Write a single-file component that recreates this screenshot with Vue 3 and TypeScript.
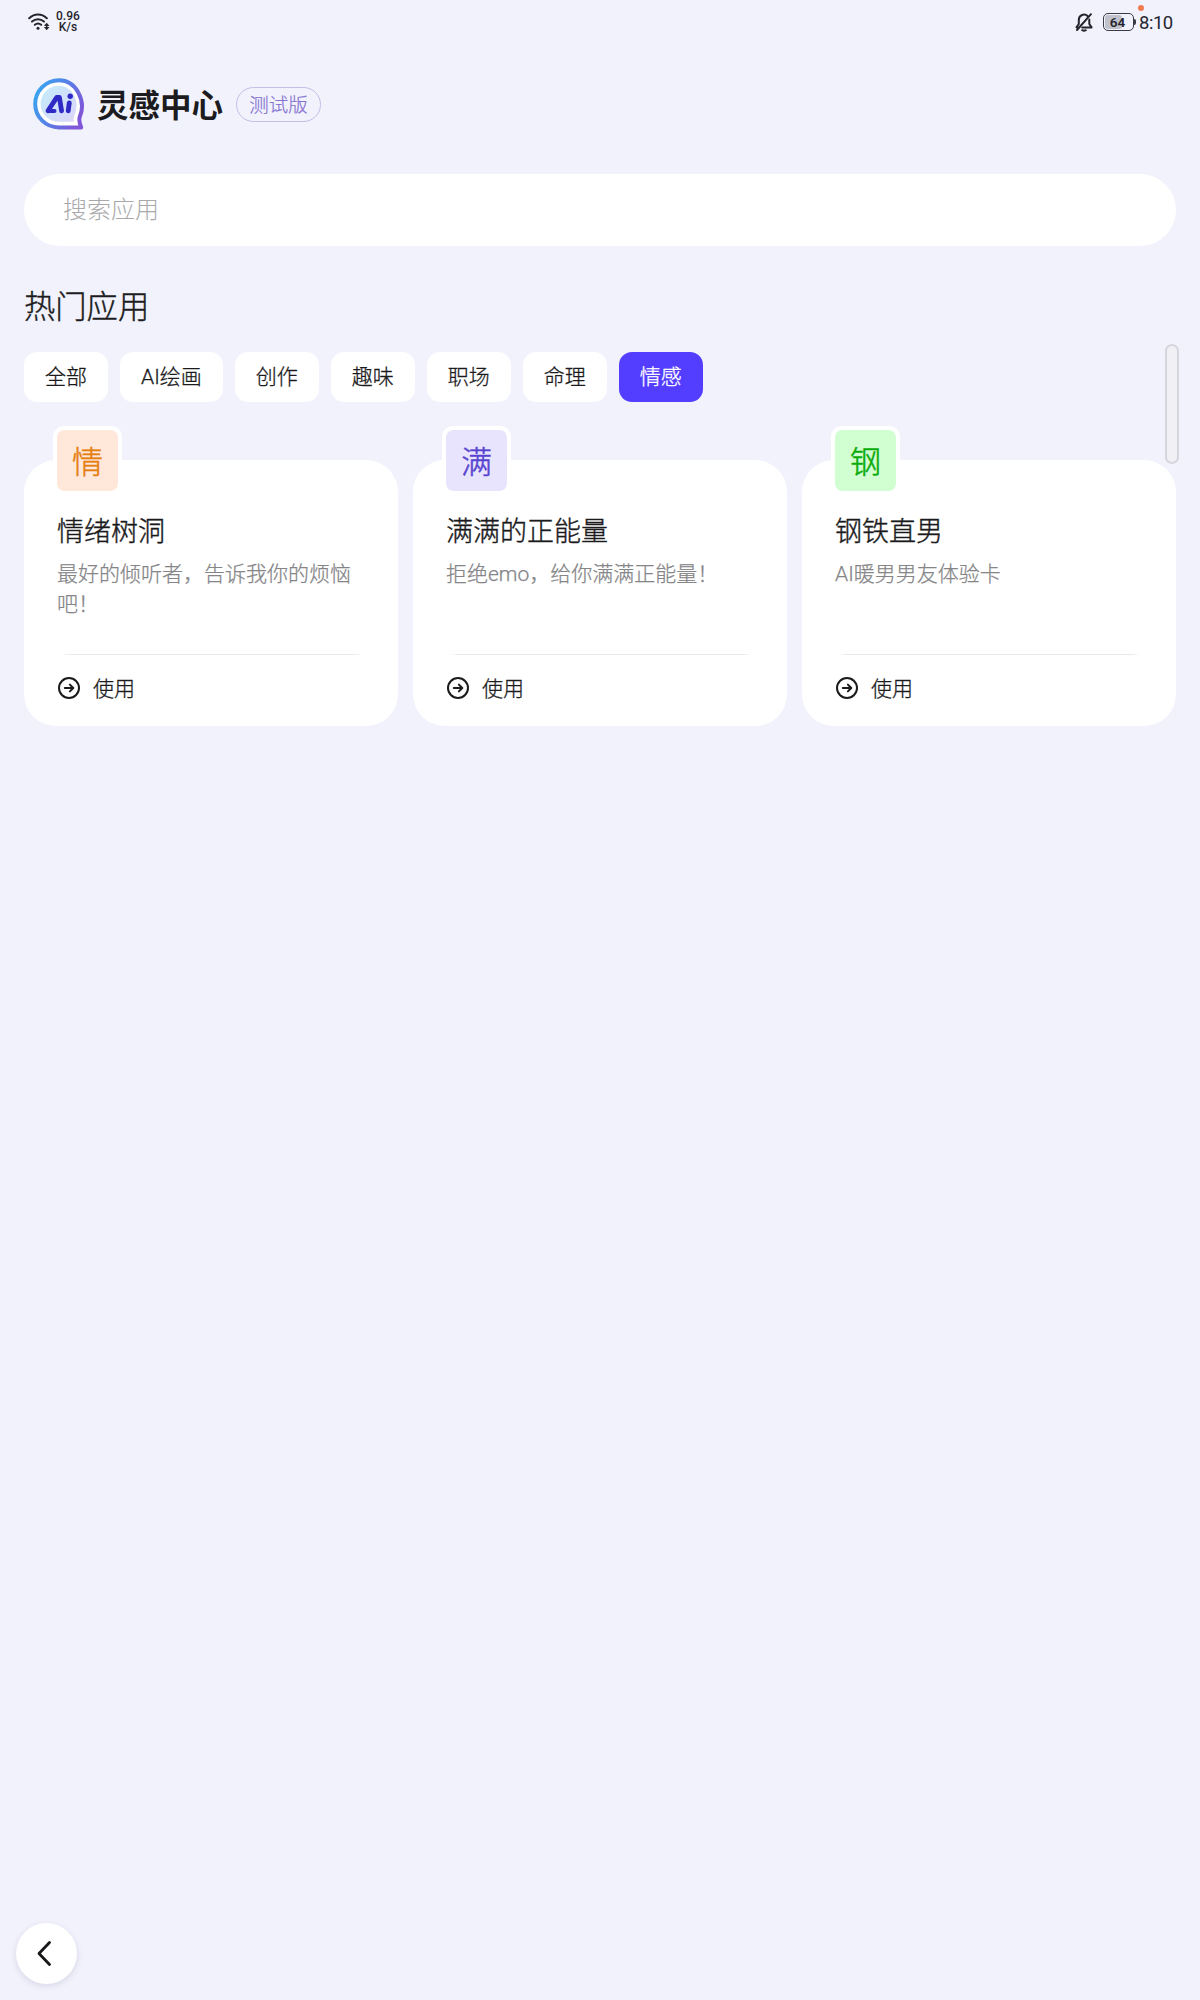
<script setup lang="ts">
import { ref } from 'vue'

interface AppCard {
  mark: string
  name: string
  desc: string
  tone: string
}

const tabs: string[] = ['全部', 'AI绘画', '创作', '趣味', '职场', '命理', '情感']
const activeTab = ref('情感')
const keyword = ref('')

const cards: AppCard[] = [
  { mark: '情', name: '情绪树洞', desc: '最好的倾听者，告诉我你的烦恼吧！', tone: 'orange' },
  { mark: '满', name: '满满的正能量', desc: '拒绝emo，给你满满正能量！', tone: 'violet' },
  { mark: '钢', name: '钢铁直男', desc: 'AI暖男男友体验卡', tone: 'green' },
]
</script>

<template>
  <div class="page">
    <div class="status">
      <div class="status-left">
        <svg class="wifi" width="22" height="18" viewBox="0 0 22 18" fill="none" stroke="#25252d" stroke-width="2" stroke-linecap="round">
          <path d="M1.200 5.200C6.400 .3 13.600 .3 18.800 5.200" />
          <path d="M4 8.600C7.500 5.500 12.500 5.500 16 8.600" />
          <path d="M6.800 11.800C8.800 10.200 11.200 10.200 13.200 11.800" />
          <circle cx="10" cy="15.200" r="1.500" fill="#25252d" stroke="none" />
          <path d="M18.700 9.800L21.500 13H15.900ZM18.700 17.200L21.500 14H15.900Z" fill="#25252d" stroke="none" />
          <path d="M18.700 12V15" stroke-width="1.500" />
        </svg>
        <div class="speed"><span>0.96</span><span>K/s</span></div>
      </div>
      <div class="status-right">
        <svg class="bell" width="18" height="20" viewBox="0 0 18 20" fill="none" stroke="#25252d" stroke-width="2" stroke-linecap="round" stroke-linejoin="round">
          <path d="M12.800 4.200C9.500 .8 3.800 3 3.800 8V12L1.500 15.400H2.800" />
          <path d="M14.300 7.500V12L16.600 15.400H7.200" />
          <path d="M16 2.200L2 18" />
          <path d="M7.200 18.200Q9 19.200 10.800 18.200" />
        </svg>
        <div class="battery"><i class="charge"></i><b>64</b></div>
        <span class="clock">8:10</span>
        <i class="dot"></i>
      </div>
    </div>

    <header class="brand">
      <svg class="logo" width="52" height="52" viewBox="0 0 52 52">
        <defs>
          <linearGradient id="ring" x1="0" y1="0.200" x2="1" y2="0.700">
            <stop offset="0" stop-color="#38a6f0" />
            <stop offset="0.500" stop-color="#587fe6" />
            <stop offset="1" stop-color="#8056d8" />
          </linearGradient>
          <linearGradient id="fill" x1="0" y1="0" x2="1" y2="1">
            <stop offset="0" stop-color="#c3ecfb" />
            <stop offset="1" stop-color="#dcd5fa" />
          </linearGradient>
        </defs>
        <path d="M26 2.200C12.800 2.200 2.200 12.800 2.200 26S12.800 49.400 26 49.400H48.200C46.800 46.200 45.800 43 46.600 39.400C53.600 23.500 43.500 2.200 26 2.200Z" fill="#fff" stroke="url(#ring)" stroke-width="4" stroke-linejoin="round" />
        <path d="M26 7.800C16 7.800 7.600 16 7.600 26S16 43.800 26 43.800H40.800Q40.300 40.500 41.400 37.500C47.800 24 39.500 7.800 26 7.800Z" fill="url(#fill)" />
        <g class="monogram" fill="none" stroke="#3029c6" stroke-width="4.800" stroke-linecap="round" stroke-linejoin="round">
          <path d="M15 32.800L23.800 19.400H26.400L28.600 32.800" />
          <path d="M16 33H21.500" stroke-width="4" />
          <path d="M36.300 24.800L35.200 32.800" />
          <circle cx="37.200" cy="18.300" r="2.700" fill="#3029c6" stroke="none" />
        </g>
      </svg>
      <h1>灵感中心</h1>
      <span class="beta">测试版</span>
    </header>

    <input v-model="keyword" class="search" type="text" placeholder="搜索应用" />

    <h2>热门应用</h2>

    <section class="content">
      <nav class="tabs">
        <button v-for="t in tabs" :key="t" :class="['tab', { active: t === activeTab }]" @click="activeTab = t">{{ t }}</button>
      </nav>
      <div class="grid">
        <article v-for="c in cards" :key="c.name" class="card">
          <div :class="['mark', c.tone]">{{ c.mark }}</div>
          <h3>{{ c.name }}</h3>
          <p>{{ c.desc }}</p>
          <div class="line"></div>
          <div class="use">
            <svg width="24" height="24" viewBox="0 0 24 24" fill="none" stroke="#1b1b1d" stroke-width="2" stroke-linecap="round" stroke-linejoin="round">
              <circle cx="12" cy="12" r="10" />
              <path d="M7.800 12H16M12.900 8.600L16.300 12L12.900 15.400" />
            </svg>
            <span>使用</span>
          </div>
        </article>
      </div>
      <div class="scrollbar"></div>
    </section>

    <button class="back" aria-label="返回">
      <svg width="62" height="62" viewBox="0 0 62 62" fill="none" stroke="#17171a" stroke-width="2.800" stroke-linecap="round" stroke-linejoin="round">
        <path d="M33.500 19.500L23 30.500L33.500 41.500" />
      </svg>
    </button>
  </div>
</template>

<style>
body {
  margin: 0;
  background: #f1f2fc;
}
</style>

<style scoped>
.page {
  position: relative;
  box-sizing: border-box;
  width: 1200px;
  height: 2000px;
  padding: 0 24px;
  overflow: hidden;
  background: #f1f2fc;
  color: #1b1b20;
  font-family: "Noto Sans CJK SC", "Noto Sans", sans-serif;
  font-weight: 300;
}
.status {
  display: flex;
  justify-content: space-between;
  height: 44px;
  margin: 0 3px 0 4px;
  font-family: Roboto, sans-serif;
  color: #25252d;
}
.status-left,
.status-right {
  display: flex;
  align-items: center;
}
.status-right {
  position: relative;
}
.wifi {
  margin-top: -1px;
}
.speed {
  display: flex;
  flex-direction: column;
  align-items: center;
  margin-left: 6px;
  font-size: 12px;
  font-weight: 500;
  line-height: 11px;
}
.battery {
  position: relative;
  box-sizing: border-box;
  width: 31px;
  height: 18px;
  margin: 0 5px 0 10px;
  border: 1.500px solid #3a3a44;
  border-radius: 5px;
  font-size: 13.500px;
  line-height: 16px;
  text-align: center;
}
.battery b {
  position: relative;
  left: -1px;
  font-weight: 600;
}
.battery::after {
  content: "";
  position: absolute;
  top: 5px;
  right: -3px;
  width: 2px;
  height: 6px;
  border-radius: 0 2px 2px 0;
  background: #3a3a44;
}
.charge {
  position: absolute;
  top: 1px;
  bottom: 1px;
  left: 1px;
  width: 17px;
  border-radius: 3px;
  background: #c1c1cb;
}
.clock {
  width: 34px;
  margin-top: 2px;
  font-size: 18.500px;
  font-weight: 400;
  letter-spacing: -0.500px;
}
.dot {
  position: absolute;
  top: 5px;
  right: 29px;
  width: 6px;
  height: 6px;
  border-radius: 50%;
  background: #f27b52;
}
.brand {
  display: flex;
  align-items: center;
  height: 52px;
  margin: 34px 0 0 9px;
}
h1,
h2,
h3,
p {
  margin: 0;
}
h1 {
  margin-left: 12px;
  font-size: 31.500px;
  font-weight: 700;
  line-height: 50px;
  height: 52px;
}
.beta {
  box-sizing: border-box;
  width: 85px;
  height: 35px;
  margin-left: 13px;
  border: 1px solid #c2bfe4;
  border-radius: 18px;
  color: #8672d2;
  font-size: 19.500px;
  line-height: 32px;
  text-align: center;
  -webkit-text-stroke: 0.200px;
}
.search {
  display: block;
  box-sizing: border-box;
  width: 1152px;
  height: 72px;
  margin-top: 44px;
  padding: 0 39px 5px;
  border: 0;
  border-radius: 36px;
  outline: 0;
  background: #fff;
  font-family: inherit;
  font-size: 24px;
  font-weight: 300;
}
.search::placeholder {
  color: #a9a9ab;
  opacity: 1;
}
h2 {
  margin-top: 37px;
  margin-bottom: 1px;
  font-size: 31.300px;
  font-weight: 300;
  line-height: 44px;
  -webkit-text-stroke: 0.400px;
}
.content {
  position: relative;
  padding-top: 24px;
}
.tabs {
  display: flex;
  gap: 12px;
}
.tab {
  height: 50px;
  padding: 0 21px;
  border: 0;
  border-radius: 13px;
  background: #fff;
  color: #1b1b1d;
  font-family: Roboto, "Noto Sans CJK SC", sans-serif;
  font-size: 21px;
  font-weight: 300;
  line-height: 48px;
  -webkit-text-stroke: 0.300px;
}
.tab.active {
  background: #533dff;
  color: #fff;
}
.grid {
  display: grid;
  grid-template-columns: repeat(3, 1fr);
  gap: 15px;
  margin-top: 58px;
}
.card {
  display: flex;
  flex-direction: column;
  box-sizing: border-box;
  height: 266px;
  padding: 0 33px;
  border-radius: 32px;
  background: #fff;
}
.mark {
  width: 61px;
  height: 61px;
  margin: -34px 0 0 -4px;
  border: 4px solid #fff;
  border-radius: 11px;
  background-clip: padding-box;
  font-size: 31px;
  line-height: 59px;
  text-align: center;
  -webkit-text-stroke: 0.500px;
}
.orange {
  background-color: #ffe8da;
  color: #e57f10;
}
.violet {
  background-color: #e8e4fe;
  color: #5543cf;
}
.green {
  background-color: #d2ffd2;
  color: #0aab0a;
}
h3 {
  margin-top: 15px;
  color: #1b1b1d;
  font-size: 27px;
  font-weight: 300;
  line-height: 40px;
  -webkit-text-stroke: 0.400px;
}
p {
  height: 60px;
  margin-top: 9px;
  color: #858588;
  font-family: Roboto, "Noto Sans CJK SC", sans-serif;
  font-size: 21px;
  line-height: 30px;
  -webkit-text-stroke: 0.250px;
}
.line {
  height: 1px;
  margin: 35px 2px 0 4px;
  background: linear-gradient(90deg, transparent, #e9e9ec 3%, #e9e9ec 97%, transparent);
}
.use {
  display: flex;
  align-items: center;
  gap: 12px;
  height: 30px;
  margin-top: 18px;
  color: #1b1b1d;
  font-size: 21px;
  -webkit-text-stroke: 0.300px;
}
.use span {
  padding-bottom: 2px;
  line-height: 28px;
}
.scrollbar {
  position: absolute;
  top: 16px;
  right: -3px;
  box-sizing: border-box;
  width: 14px;
  height: 120px;
  border: 2px solid #d6d6de;
  border-radius: 7px;
  background: #f0f0f5;
}
.back {
  position: absolute;
  bottom: 16px;
  left: 16px;
  width: 61px;
  height: 61px;
  padding: 0;
  border: 0;
  border-radius: 50%;
  background: #fff;
  box-shadow: 0 2px 6px rgba(60, 60, 100, 0.14);
}
.back svg {
  display: block;
}
</style>
